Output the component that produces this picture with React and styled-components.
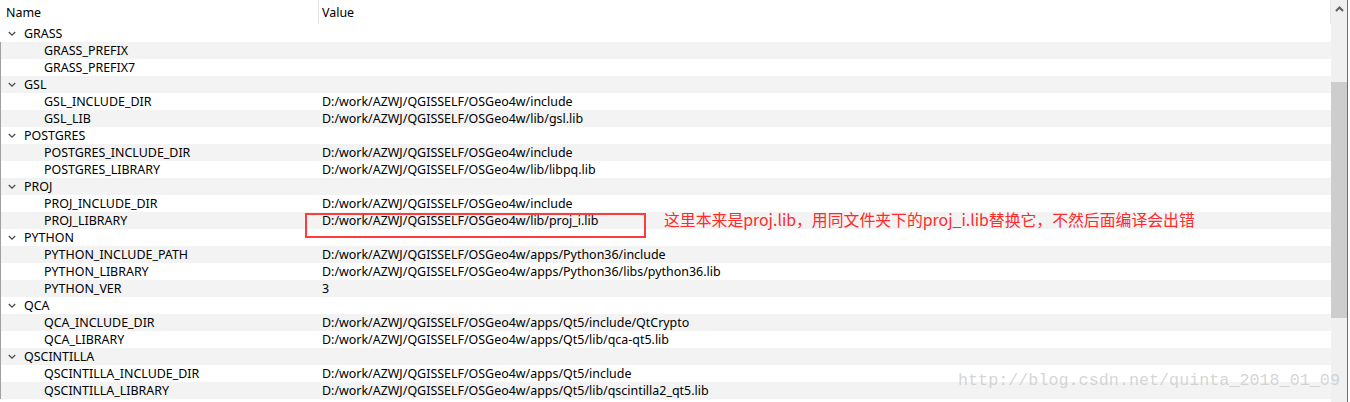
import React from "react";
import styled, { createGlobalStyle } from "styled-components";

const GlobalStyle = createGlobalStyle`
  html, body {
    margin: 0;
    padding: 0;
    background: #ffffff;
  }
  body {
    font-family: "Noto Sans", "Noto Sans CJK SC", sans-serif;
  }
`;

const groups = [
  { name: "GRASS", items: [["GRASS_PREFIX", ""], ["GRASS_PREFIX7", ""]] },
  {
    name: "GSL",
    items: [
      ["GSL_INCLUDE_DIR", "D:/work/AZWJ/QGISSELF/OSGeo4w/include"],
      ["GSL_LIB", "D:/work/AZWJ/QGISSELF/OSGeo4w/lib/gsl.lib"],
    ],
  },
  {
    name: "POSTGRES",
    items: [
      ["POSTGRES_INCLUDE_DIR", "D:/work/AZWJ/QGISSELF/OSGeo4w/include"],
      ["POSTGRES_LIBRARY", "D:/work/AZWJ/QGISSELF/OSGeo4w/lib/libpq.lib"],
    ],
  },
  {
    name: "PROJ",
    items: [
      ["PROJ_INCLUDE_DIR", "D:/work/AZWJ/QGISSELF/OSGeo4w/include"],
      ["PROJ_LIBRARY", "D:/work/AZWJ/QGISSELF/OSGeo4w/lib/proj_i.lib", true],
    ],
  },
  {
    name: "PYTHON",
    items: [
      ["PYTHON_INCLUDE_PATH", "D:/work/AZWJ/QGISSELF/OSGeo4w/apps/Python36/include"],
      ["PYTHON_LIBRARY", "D:/work/AZWJ/QGISSELF/OSGeo4w/apps/Python36/libs/python36.lib"],
      ["PYTHON_VER", "3"],
    ],
  },
  {
    name: "QCA",
    items: [
      ["QCA_INCLUDE_DIR", "D:/work/AZWJ/QGISSELF/OSGeo4w/apps/Qt5/include/QtCrypto"],
      ["QCA_LIBRARY", "D:/work/AZWJ/QGISSELF/OSGeo4w/apps/Qt5/lib/qca-qt5.lib"],
    ],
  },
  {
    name: "QSCINTILLA",
    items: [
      ["QSCINTILLA_INCLUDE_DIR", "D:/work/AZWJ/QGISSELF/OSGeo4w/apps/Qt5/include"],
      ["QSCINTILLA_LIBRARY", "D:/work/AZWJ/QGISSELF/OSGeo4w/apps/Qt5/lib/qscintilla2_qt5.lib"],
    ],
  },
];

function buildRows() {
  const rows = [];
  groups.forEach((g) => {
    rows.push({ group: true, name: g.name, value: "" });
    g.items.forEach(([name, value, marked]) => {
      rows.push({ group: false, name, value, marked });
    });
  });
  return rows;
}

const Chevron = () => (
  <svg width="8" height="6" viewBox="0 0 8 6">
    <path d="M0.8 1 L4 4.2 L7.2 1" fill="none" stroke="#4a4a4a" strokeWidth="1.3" />
  </svg>
);

const UpArrow = () => (
  <svg width="9" height="6" viewBox="0 0 9 6">
    <path d="M1 5 L4.5 1.5 L8 5" fill="none" stroke="#606060" strokeWidth="2" />
  </svg>
);

export default function App() {
  const rows = buildRows();

  return (
    <>
      <GlobalStyle />
      <Frame>
        <Tree>
          <Header>
            <HeadCell $pad={5}>Name</HeadCell>
            <HeadCell $pad={3}>Value</HeadCell>
          </Header>
          {rows.map((r, i) => (
            <Row key={r.name} $alt={i % 2 === 1} $first={i === 0}>
              <NameCell $indent={r.group ? 0 : 1}>
                {r.group && (
                  <Toggle>
                    <Chevron />
                  </Toggle>
                )}
                {r.name}
              </NameCell>
              <ValueCell>
                {r.value}
                {r.marked && (
                  <>
                    <MarkBox />
                    <Note>
                      这里本来是proj.lib，用同文件夹下的proj_i.lib替换它，不然后面编译会出错
                    </Note>
                  </>
                )}
              </ValueCell>
            </Row>
          ))}
        </Tree>
        <ScrollBar>
          <ArrowButton>
            <UpArrow />
          </ArrowButton>
          <Thumb />
        </ScrollBar>
        <Edge />
        <Watermark>http://blog.csdn.net/quinta_2018_01_09</Watermark>
      </Frame>
    </>
  );
}

// styling
const Frame = styled.div`
  position: relative;
  display: flex;
  width: 1350px;
  height: 402px;
  overflow: hidden;
  background: #ffffff;
  color: #000000;
  font-size: 12.45px;
`;

const Tree = styled.div`
  display: flex;
  flex-direction: column;
  width: 1331px;
`;

const Header = styled.div`
  display: grid;
  grid-template-columns: 318px 1012px;
  height: 25px;
  margin-left: 1px;
`;

const HeadCell = styled.div`
  display: flex;
  align-items: center;
  padding-left: ${(p) => p.$pad}px;
  border-right: 1px solid #e5e5e5;
  height: 24px;
`;

const Row = styled.div`
  display: grid;
  grid-template-columns: 321px 1009px;
  height: 17px;
  background: ${(p) => (p.$alt ? "#f3f3f3" : "#ffffff")};
  border-left: 1px solid ${(p) => (p.$first ? "#ffffff" : "#a0a0a0")};
  flex-shrink: 0;
`;

const NameCell = styled.div`
  display: flex;
  align-items: center;
  padding-left: ${(p) => (p.$indent ? "43px" : "7px")};
  white-space: nowrap;
`;

const Toggle = styled.span`
  display: inline-flex;
  width: 16px;
  margin-top: 1px;
`;

const ValueCell = styled.div`
  position: relative;
  display: flex;
  align-items: center;
  white-space: nowrap;
`;

const MarkBox = styled.div`
  position: absolute;
  left: -17px;
  top: 1px;
  width: 341px;
  height: 25px;
  border: 2px solid #ff3b3b;
  box-sizing: border-box;
`;

const Note = styled.span`
  position: absolute;
  left: 342px;
  top: -2px;
  color: #ff2a2a;
  font-family: "Noto Sans CJK SC", "Noto Sans", sans-serif;
  font-size: 15.85px;
  line-height: 20px;
`;

const ScrollBar = styled.div`
  display: flex;
  flex-direction: column;
  width: 16px;
  background: #f0f0f0;
`;

const ArrowButton = styled.div`
  display: flex;
  justify-content: center;
  align-items: center;
  height: 17px;
`;

const Thumb = styled.div`
  margin-top: 65px;
  height: 236px;
  background: #cdcdcd;
`;

const Edge = styled.div`
  width: 1px;
  background: #6d6d73;
`;

const Watermark = styled.div`
  position: absolute;
  left: 958px;
  top: 370px;
  color: rgba(200, 200, 200, 0.75);
  font-family: "Liberation Mono", monospace;
  font-size: 16.75px;
  line-height: 22px;
  white-space: nowrap;
`;
